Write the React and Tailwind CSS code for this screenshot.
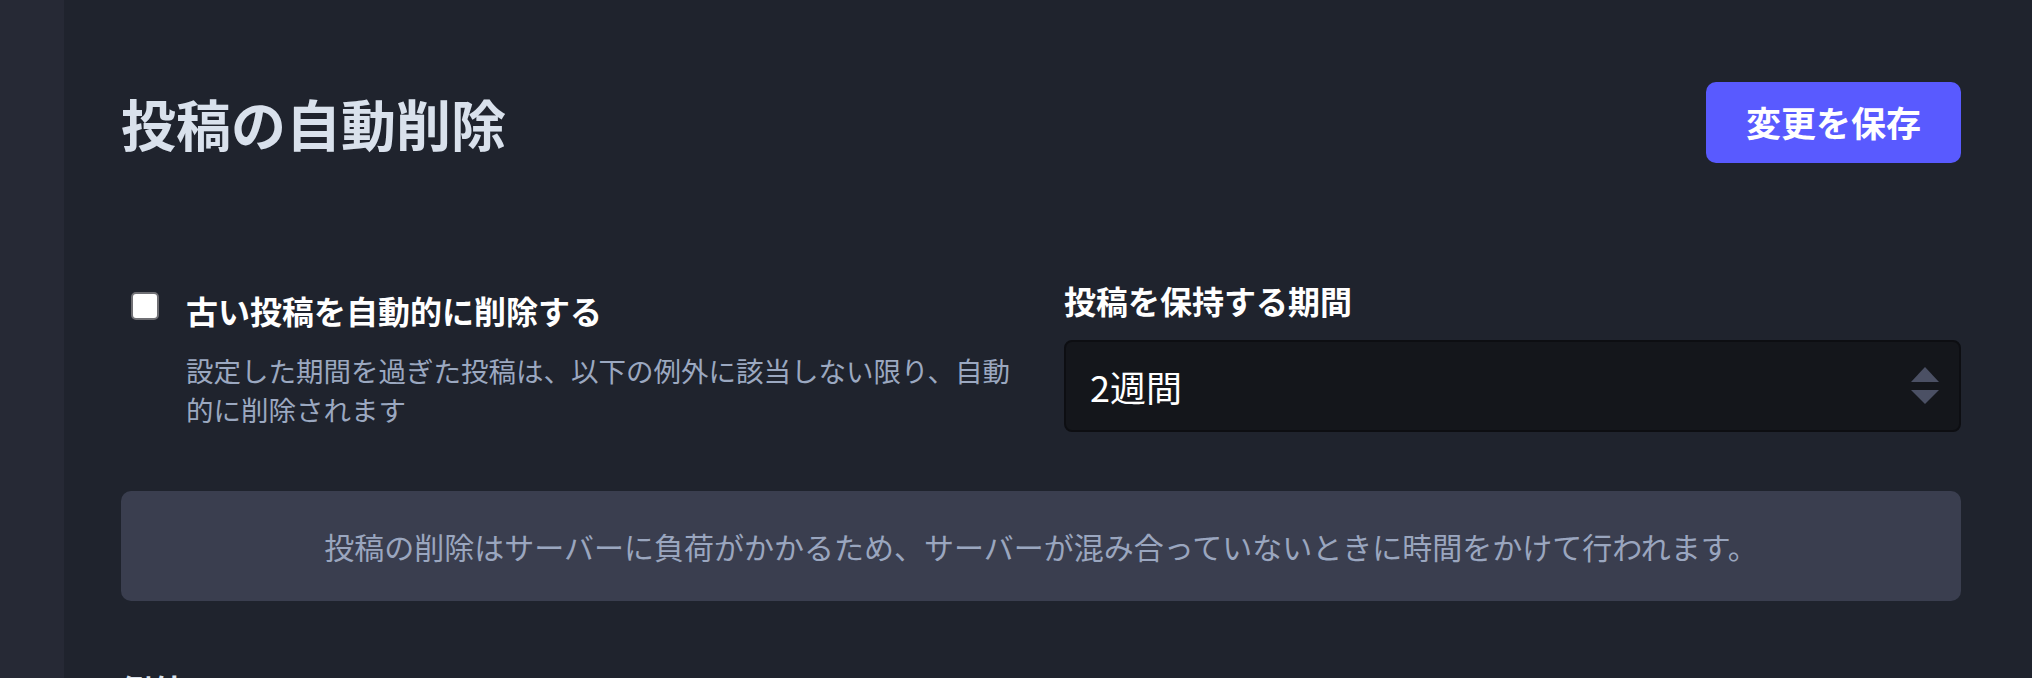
import React from 'react';

const SelectArrows = () => (
  <svg width="30" height="38" viewBox="0 0 30 38" className="shrink-0">
    <polygon points="15,0 29,15 1,15" fill="#4b5064" />
    <polygon points="1,23 29,23 15,37" fill="#4b5064" />
  </svg>
);

const App = () => {
  return (
    <div className="flex h-[678px] overflow-hidden bg-[#1f232d] font-['Noto_Sans_CJK_JP','Noto_Sans',sans-serif]">
      {/* Sidebar */}
      <aside className="w-16 shrink-0 bg-[#262935]" />

      <main className="flex-1 pl-[57px] pr-[71px] pt-[82px]">
        {/* Header */}
        <div className="flex h-[81px] items-center justify-between">
          <h1 className="text-[55px] font-bold leading-none text-[#d9e1ec]">投稿の自動削除</h1>
          <button className="h-[81px] w-[255px] rounded-[10px] bg-[#595aff] text-[35px] font-bold text-white">
            変更を保存
          </button>
        </div>

        {/* Settings row */}
        <div className="mt-[117px] grid grid-cols-2 gap-[46px]">
          <div className="flex gap-[27px] pt-[10px]">
            <div className="ml-[10px] mt-[2px] h-[28px] w-[28px] shrink-0 rounded-[5px] border-2 border-[#6f6f74] bg-white" />
            <div>
              <div className="text-[32px] font-bold leading-[40px] text-white">古い投稿を自動的に削除する</div>
              <p className="mt-[21px] text-[27.5px] leading-[39px] text-[#9ba8c0]">
                設定した期間を過ぎた投稿は、以下の例外に該当しない限り、自動的に削除されます
              </p>
            </div>
          </div>

          <div>
            <div className="text-[32px] font-bold leading-[40px] text-white">投稿を保持する期間</div>
            <div className="mt-[20px] flex h-[92px] items-center justify-between rounded-[8px] border-2 border-[#0d0e12] bg-[#14161b] pl-[24px] pr-[19px]">
              <span className="text-[36px] text-white">2週間</span>
              <SelectArrows />
            </div>
          </div>
        </div>

        {/* Notice */}
        <div className="mt-[59px] flex h-[110px] items-center justify-center rounded-[10px] bg-[#3a3e4f] text-[30px] text-[#9aa6bf]">
          投稿の削除はサーバーに負荷がかかるため、サーバーが混み合っていないときに時間をかけて行われます。
        </div>

        {/* Next section */}
        <h2 className="mt-[68px] text-[31px] font-bold leading-[40px] text-[#d9e1ec]">例外</h2>
      </main>
    </div>
  );
};

export default App;
